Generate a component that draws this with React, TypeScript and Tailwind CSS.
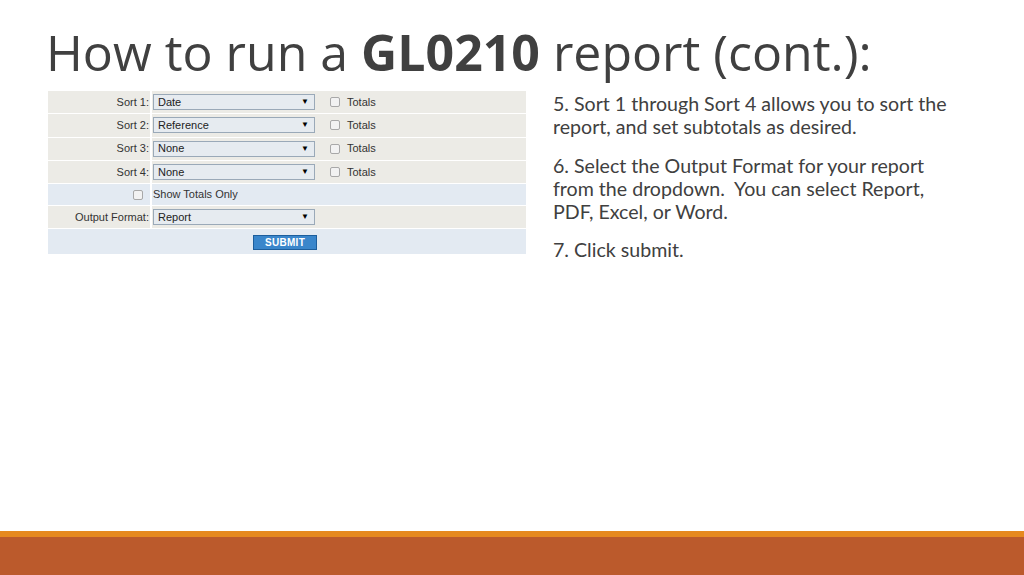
import React from "react";

const sorts = [
  { label: "Sort 1:", value: "Date" },
  { label: "Sort 2:", value: "Reference" },
  { label: "Sort 3:", value: "None" },
  { label: "Sort 4:", value: "None" },
];

function Select({ value }: { value: string }) {
  return (
    <div className="flex h-[16px] w-[162px] items-center justify-between border border-[#9aa9b8] bg-[#e6ebf0] pl-[4px] pr-[5px] text-[11px] text-[#222]">
      <span>{value}</span>
      <span className="text-[8px] leading-none text-black">▼</span>
    </div>
  );
}

function Checkbox() {
  return <div className="h-[10px] w-[10px] rounded-[2px] border border-[#a8a8a8] bg-[#f2f2f2]" />;
}

export default function App() {
  return (
    <div className="flex h-[575px] w-[1024px] flex-col bg-white">
      <h1
        className="pl-[46px] pt-[22px] text-[50px] leading-[60px] text-[#404040]"
        style={{ fontFamily: '"Open Sans", sans-serif' }}
      >
        How to run a <span className="font-bold">GL0210</span> report (cont.):
      </h1>

      <div className="mt-[8px] flex items-start">
        {/* report form screenshot */}
        <div
          className="ml-[48px] mt-[1px] flex w-[478px] flex-col gap-[1px] bg-white text-[11px] text-[#333]"
          style={{ fontFamily: '"Liberation Sans", Arial, sans-serif' }}
        >
          {sorts.map((s) => (
            <div key={s.label} className="flex h-[22.3px] gap-[2px]">
              <div className="flex w-[102px] items-center justify-end bg-[#ecebe6] pr-[1px]">{s.label}</div>
              <div className="flex flex-1 items-center bg-[#ecebe6] pl-[1px]">
                <Select value={s.value} />
                <div className="ml-[15px]">
                  <Checkbox />
                </div>
                <span className="ml-[7px]">Totals</span>
              </div>
            </div>
          ))}
          <div className="flex h-[21px] gap-[2px]">
            <div className="flex w-[102px] items-center justify-end bg-[#e3eaf2] pr-[7px]">
              <Checkbox />
            </div>
            <div className="flex flex-1 items-center bg-[#e3eaf2] pl-[1px]">Show Totals Only</div>
          </div>
          <div className="flex h-[22px] gap-[2px]">
            <div className="flex w-[102px] items-center justify-end bg-[#ecebe6] pr-[1px]">Output Format:</div>
            <div className="flex flex-1 items-center bg-[#ecebe6] pl-[1px]">
              <Select value="Report" />
            </div>
          </div>
          <div className="flex h-[25px] items-center justify-center bg-[#e3eaf2] pr-[4px] pt-[2px]">
            <div className="flex h-[15px] w-[64px] items-center justify-center border border-[#1d5e9c] bg-[#3a86cb] text-[10px] font-bold tracking-[0.3px] text-white">
              SUBMIT
            </div>
          </div>
        </div>

        {/* instructions */}
        <div
          className="ml-[27px] mt-[2px] flex w-[400px] flex-col gap-[15px] text-[19.6px] leading-[23.3px] text-[#404040]"
          style={{ fontFamily: 'Lato, sans-serif' }}
        >
          <p>5. Sort 1 through Sort 4 allows you to sort the report, and set subtotals as desired.</p>
          <p>
            6. Select the Output Format for your report from the dropdown.&nbsp; You can select Report, PDF, Excel, or Word.
          </p>
          <p>7. Click submit.</p>
        </div>
      </div>

      <div className="mt-auto">
        <div className="h-[6px] bg-[#e6891f]" />
        <div className="h-[38px] bg-[#bb5a2c]" />
      </div>
    </div>
  );
}
